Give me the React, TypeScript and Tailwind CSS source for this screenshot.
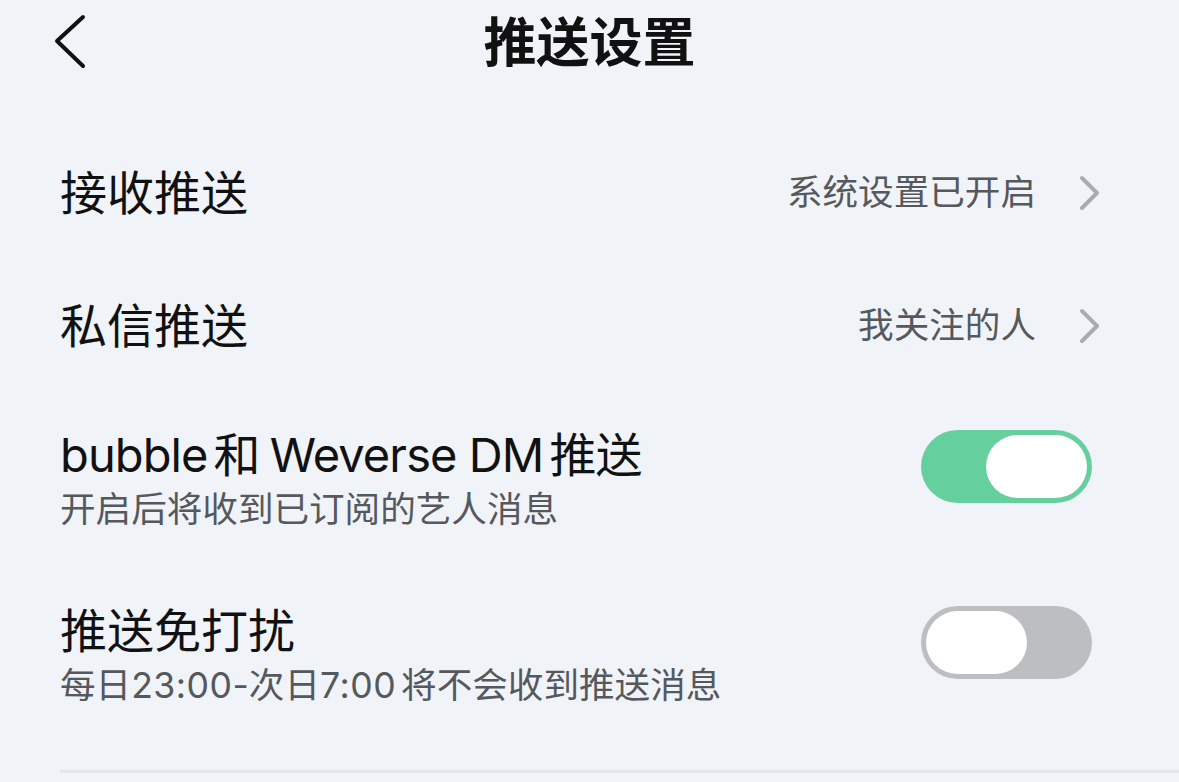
import React from "react";

const font = {
  fontFamily: '"Inter", "Noto Sans CJK SC", sans-serif',
};

const Chevron = () => (
  <svg width="22" height="36" viewBox="0 0 22 36" fill="none">
    <polyline
      points="3,3 18,18 3,33"
      stroke="#a9abae"
      strokeWidth="4"
      strokeLinecap="round"
      strokeLinejoin="round"
    />
  </svg>
);

const Toggle = ({ on }: { on: boolean }) => (
  <div
    className={`flex h-[73px] w-[171px] shrink-0 items-center rounded-full p-[5px] ${
      on ? "justify-end bg-[#66cf9e]" : "justify-start bg-[#bdbec2]"
    }`}
  >
    <div className="h-[63px] w-[101px] rounded-full bg-white" />
  </div>
);

const LinkRow = ({ label, value }: { label: string; value: string }) => (
  <div className="flex h-[100px] items-center justify-between">
    <span className="text-[47px] leading-[56px] text-[#111]">{label}</span>
    <div className="flex items-center gap-[43px] pr-[78px]">
      <span className="text-[35.6px] leading-[44px] text-[#55585c]">{value}</span>
      <Chevron />
    </div>
  </div>
);

const SwitchRow = ({
  label,
  hint,
  on,
}: {
  label: React.ReactNode;
  hint: React.ReactNode;
  on: boolean;
}) => (
  <div className="flex items-start justify-between pr-[87px]">
    <div className="flex flex-col">
      <span className="text-[47px] leading-[56px] text-[#111]">{label}</span>
      <span className="mt-[5px] text-[35.6px] leading-[44px] text-[#55585c]">
        {hint}
      </span>
    </div>
    <div className="mt-[3px]">
      <Toggle on={on} />
    </div>
  </div>
);

export default function App() {
  return (
    <div
      className="h-[782px] w-[1179px] overflow-hidden bg-[#f0f3f8]"
      style={font}
    >
      {/* Header */}
      <div className="relative flex h-[86px] items-center justify-center">
        <svg
          className="absolute left-[50px] top-[10px]"
          width="40"
          height="64"
          viewBox="0 0 40 64"
          fill="none"
        >
          <polyline
            points="33,7 7,31 33,56"
            stroke="#111"
            strokeWidth="4"
            strokeLinecap="round"
            strokeLinejoin="round"
          />
        </svg>
        <h1 className="text-[53px] font-bold leading-[60px] text-[#111]">
          推送设置
        </h1>
      </div>

      <div className="pl-[60px]">
        <div className="mt-[57px]">
          <LinkRow label="接收推送" value="系统设置已开启" />
        </div>
        <div className="mt-[33px]">
          <LinkRow label="私信推送" value="我关注的人" />
        </div>
        <div className="mt-[51px]">
          <SwitchRow
            label={
              <span className="tracking-[-0.9px]">
                bubble<span className="ml-[6px]">和</span>
                <span className="ml-[10px]">Weverse DM</span>
                <span className="ml-[6px]">推送</span>
              </span>
            }
            hint="开启后将收到已订阅的艺人消息"
            on
          />
        </div>
        <div className="mt-[71px]">
          <SwitchRow
            label="推送免打扰"
            hint={
              <span>
                每日<span className="tracking-[0.5px]">23:00</span>-次日
                <span className="tracking-[0.5px]">7:00</span>
                <span className="ml-[5px]">将不会收到推送消息</span>
              </span>
            }
            on={false}
          />
        </div>
        <div className="mt-[62px] h-[3px] bg-[#e2e5e9]" />
      </div>
    </div>
  );
}
